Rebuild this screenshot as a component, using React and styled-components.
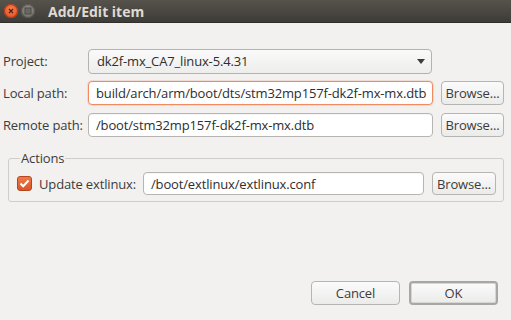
import React, { useState } from "react";
import styled, { createGlobalStyle } from "styled-components";

const GlobalStyle = createGlobalStyle`
  html, body {
    margin: 0;
    padding: 0;
    background: #f2f1f0;
  }
  body {
    font-family: "Open Sans", "Noto Sans", "DejaVu Sans", sans-serif;
    font-size: 13px;
    letter-spacing: -0.15px;
    color: #3c3c3c;
  }
`;

const Window = styled.div`
  width: 511px;
  height: 320px;
  display: flex;
  flex-direction: column;
  background: #f2f1f0;
  overflow: hidden;
`;

const TitleBar = styled.div`
  height: 23px;
  flex: none;
  display: flex;
  align-items: center;
  padding-left: 4px;
  background: linear-gradient(#56534d, #3e3c38);
  border-bottom: 1px solid #2f2e2b;
  box-sizing: border-box;
`;

const WinButton = styled.div`
  width: 14px;
  height: 14px;
  border-radius: 50%;
  margin-right: 3px;
  display: flex;
  align-items: center;
  justify-content: center;
  background: ${p => (p.close ? "radial-gradient(circle at 50% 35%, #f37d50, #df4a1c)" : "radial-gradient(circle at 50% 35%, #8e8b85, #6f6c67)")};
  box-shadow: inset 0 0 0 1px ${p => (p.close ? "#b23a14" : "#55534f")};
`;

const Title = styled.span`
  margin-left: 10px;
  font-weight: bold;
  font-size: 14px;
  letter-spacing: 0;
  color: #dfdbd2;
`;

const Body = styled.div`
  flex: 1;
  display: flex;
  flex-direction: column;
  padding: 26px 7px 14px 3px;
`;

const Form = styled.div`
  display: grid;
  grid-template-columns: 85px 345px 71px;
  grid-auto-rows: 24px;
  row-gap: 8px;
  align-items: center;
`;

const Label = styled.label`
  white-space: nowrap;
`;

const Field = styled.div`
  height: ${p => p.h || 24}px;
  box-sizing: border-box;
  border: 1px solid ${p => (p.focused ? "#ef8a61" : "#b7b5b2")};
  border-radius: 4px;
  background: #ffffff;
  display: flex;
  align-items: center;
  padding: 0 7px;
  white-space: nowrap;
  overflow: hidden;
  color: #2e2e2e;
  flex: ${p => (p.grow ? 1 : "none")};
  box-shadow: ${p => (p.focused ? "0 0 0 1px rgba(240,119,70,0.18)" : "inset 0 1px 1px rgba(0,0,0,0.04)")};
`;

const Caret = styled.span`
  display: inline-block;
  width: 1px;
  height: 15px;
  background: #222;
  margin-left: 1px;
`;

const Combo = styled.div`
  height: 25px;
  width: 344px;
  box-sizing: border-box;
  border: 1px solid #b5b3b0;
  border-radius: 4px;
  background: linear-gradient(#fafafa, #ededec);
  display: flex;
  align-items: center;
  justify-content: space-between;
  padding: 0 6px 0 8px;
  color: #2e2e2e;
`;

const Arrow = styled.span`
  width: 0;
  height: 0;
  border-left: 4px solid transparent;
  border-right: 4px solid transparent;
  border-top: 5px solid #3c3c3c;
`;

const Button = styled.button`
  font: inherit;
  letter-spacing: inherit;
  color: #3c3c3c;
  height: ${p => p.h || 24}px;
  width: ${p => p.w || 63}px;
  margin-left: ${p => p.ml || 0}px;
  box-sizing: border-box;
  padding: 0;
  border: ${p => (p.isDefault ? "2px solid #a9a7a4" : "1px solid #b7b5b2")};
  border-radius: 4px;
  background: linear-gradient(#fbfbfb, #ebebea);
  box-shadow: ${p => (p.isDefault ? "inset 0 0 0 1px #d8d6d3" : "none")};
  display: flex;
  align-items: center;
  justify-content: center;
  flex: none;
`;

const Group = styled.fieldset`
  margin: 14px 0 0 5px;
  padding: 7px 7px 6px 8px;
  border: 1px solid #cfcdca;
  border-radius: 3px;
  display: flex;
  align-items: center;
  gap: 7px;
  min-width: 0;
`;

const Legend = styled.legend`
  padding: 0 1px;
  margin-left: 3px;
  line-height: 14px;
`;

const Check = styled.div`
  width: 15px;
  height: 15px;
  box-sizing: border-box;
  border-radius: 3px;
  background: linear-gradient(#ef7a49, #d8562a);
  border: 1px solid #b3461f;
  display: flex;
  align-items: center;
  justify-content: center;
  flex: none;
`;

const Footer = styled.div`
  margin-top: auto;
  display: flex;
  justify-content: flex-end;
  gap: 9px;
  padding-right: 6px;
  padding-bottom: 1px;
`;

export default function App() {
  const [checked] = useState(true);
  return (
    <Window>
      <GlobalStyle />
      <TitleBar>
        <WinButton close>
          <svg width="8" height="8" viewBox="0 0 8 8">
            <path d="M2 2L6 6M6 2L2 6" stroke="#5a1a06" strokeWidth="1.2" />
          </svg>
        </WinButton>
        <WinButton>
          <svg width="8" height="8" viewBox="0 0 8 8">
            <rect x="1" y="1" width="6" height="6" fill="#6a6863" stroke="#4e4c48" />
          </svg>
        </WinButton>
        <Title>Add/Edit item</Title>
      </TitleBar>
      <Body>
        <Form>
          <Label>Project:</Label>
          <Combo>
            <span>dk2f-mx_CA7_linux-5.4.31</span>
            <Arrow />
          </Combo>
          <span />
          <Label>Local path:</Label>
          <Field focused>
            build/arch/arm/boot/dts/stm32mp157f-dk2f-mx-mx.dtb
            <Caret />
          </Field>
          <Button ml={8}>Browse...</Button>
          <Label>Remote path:</Label>
          <Field>/boot/stm32mp157f-dk2f-mx-mx.dtb</Field>
          <Button ml={8}>Browse...</Button>
        </Form>
        <Group>
          <Legend>Actions</Legend>
          <Check>
            {checked && (
              <svg width="11" height="9" viewBox="0 0 11 9">
                <path d="M1.5 4.5L4.2 7.2L9.5 1.5" fill="none" stroke="#ffffff" strokeWidth="2" />
              </svg>
            )}
          </Check>
          <Label>Update extlinux:</Label>
          <Field grow h={23}>/boot/extlinux/extlinux.conf</Field>
          <Button h={23} w={64} ml={1}>Browse...</Button>
        </Group>
        <Footer>
          <Button w={89} h={24}>Cancel</Button>
          <Button w={89} h={24} isDefault>OK</Button>
        </Footer>
      </Body>
    </Window>
  );
}
